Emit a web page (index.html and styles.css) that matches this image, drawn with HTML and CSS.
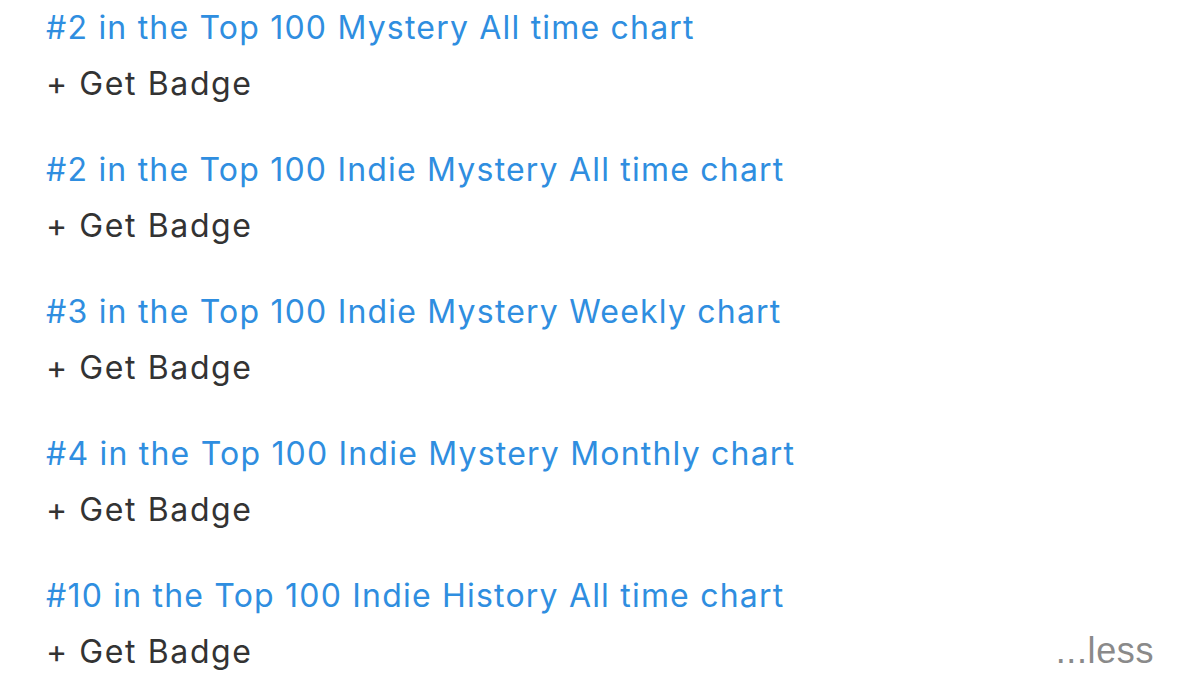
FILE: index.html
```html
<!DOCTYPE html>
<html>
<head>
<meta charset="utf-8">
<link rel="stylesheet" href="styles.css">
</head>
<body>
<div class="list">
  <div class="item">
    <a class="title">#2 in the Top 100 Mystery All time chart</a>
    <div class="badge">+ Get Badge</div>
  </div>
  <div class="item">
    <a class="title">#2 in the Top 100 Indie Mystery All time chart</a>
    <div class="badge">+ Get Badge</div>
  </div>
  <div class="item">
    <a class="title">#3 in the Top 100 Indie Mystery Weekly chart</a>
    <div class="badge">+ Get Badge</div>
  </div>
  <div class="item">
    <a class="title">#4 in the Top 100 Indie Mystery Monthly chart</a>
    <div class="badge">+ Get Badge</div>
  </div>
  <div class="item last">
    <a class="title">#10 in the Top 100 Indie History All time chart</a>
    <div class="badge-row">
      <div class="badge">+ Get Badge</div>
      <div class="less">...less</div>
    </div>
  </div>
</div>
</body>
</html>
```
FILE: styles.css
```css
html, body {
  margin: 0;
  padding: 0;
  background: #ffffff;
}
.list {
  padding: 0 46px 0 46px;
  font-family: Inter, "Noto Sans", sans-serif;
  font-size: 32px;
}
.item {
  display: flex;
  flex-direction: column;
  height: 142px;
}
.title {
  display: block;
  color: #2f8ee0;
  line-height: 56px;
  letter-spacing: 1.2px;
}
.badge {
  color: #333333;
  line-height: 56px;
  letter-spacing: 1.6px;
}
.badge-row {
  display: flex;
  justify-content: space-between;
  align-items: baseline;
}
.less {
  font-family: "Liberation Sans", Arial, sans-serif;
  color: #8a8a8a;
  font-size: 36px;
  letter-spacing: 0.6px;
}
```
